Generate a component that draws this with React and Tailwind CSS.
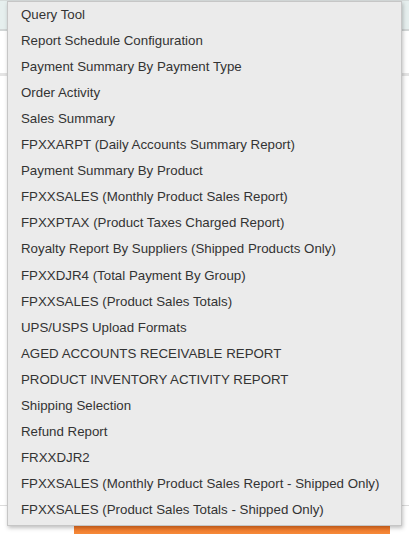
const reports = [
  'Query Tool',
  'Report Schedule Configuration',
  'Payment Summary By Payment Type',
  'Order Activity',
  'Sales Summary',
  'FPXXARPT (Daily Accounts Summary Report)',
  'Payment Summary By Product',
  'FPXXSALES (Monthly Product Sales Report)',
  'FPXXPTAX (Product Taxes Charged Report)',
  'Royalty Report By Suppliers (Shipped Products Only)',
  'FPXXDJR4 (Total Payment By Group)',
  'FPXXSALES (Product Sales Totals)',
  'UPS/USPS Upload Formats',
  'AGED ACCOUNTS RECEIVABLE REPORT',
  'PRODUCT INVENTORY ACTIVITY REPORT',
  'Shipping Selection',
  'Refund Report',
  'FRXXDJR2',
  'FPXXSALES (Monthly Product Sales Report - Shipped Only)',
  'FPXXSALES (Product Sales Totals - Shipped Only)',
]

export default function App() {
  return (
    <div className="relative w-[409px] h-[534px] overflow-hidden bg-white font-['Liberation_Sans',Arial,sans-serif]">
      {/* page behind the menu */}
      <div className="flex flex-col h-full">
        <div className="h-[31px] bg-[#e6efee] border-t border-[#d6dcdb] border-b-2 border-b-[#d2d6d6]" />
        <div className="h-[42px]" />
        <div className="h-[3px] bg-[#e4e4e4]" />
        <div className="flex-1" />
        <div className="h-px bg-[#dcdcdc] mb-[17px]" />
        <div className="ml-[74px] w-[316px] h-[11px] bg-gradient-to-b from-[#ef6a17] to-[#f58a3a]" />
      </div>

      {/* dropdown menu */}
      <ul className="absolute left-[7px] top-[1px] w-[395px] h-[525px] bg-[#ebebeb] border border-[#c6c6c6] shadow-[1px_2px_4px_rgba(0,0,0,0.25)]">
        {reports.map((r) => (
          <li key={r} className="h-[26.1px] flex items-center pl-[13px] pb-[1px] text-[13.3px] text-[#333] whitespace-nowrap">
            {r}
          </li>
        ))}
      </ul>
    </div>
  )
}
